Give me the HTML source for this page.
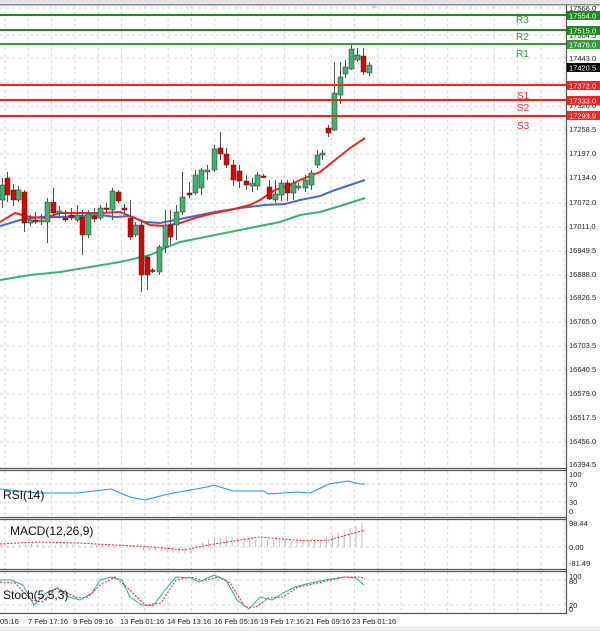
<!DOCTYPE html>
<html><head><meta charset="utf-8"><style>
body{margin:0;background:#fff;width:600px;height:631px;overflow:hidden;font-family:"Liberation Sans",sans-serif}
svg{display:block}
</style></head><body>
<svg id="s" width="600" height="631" xmlns="http://www.w3.org/2000/svg" font-family="Liberation Sans, sans-serif">
<rect x="0" y="0" width="600" height="631" fill="#fff"/>
<rect x="0" y="0" width="600" height="4" fill="#e4e4e4"/>
<rect x="0" y="4" width="600" height="1.5" fill="#8a8a8a"/>
<polygon points="370,5 378,5 374,9" fill="#d0d0d0"/>
<g id="grid" stroke="#d8d8d8" stroke-dasharray="3,3" stroke-width="1"></g>
<g id="chart"></g>
<!-- level lines -->
<g stroke-width="2">
<line x1="0" y1="15" x2="567" y2="15" stroke="#1f8a1f"/>
<line x1="0" y1="30" x2="567" y2="30" stroke="#1f8a1f"/>
<line x1="0" y1="44" x2="567" y2="44" stroke="#3a9a3a"/>
<line x1="0" y1="85" x2="567" y2="85" stroke="#ff2020"/>
<line x1="0" y1="100" x2="567" y2="100" stroke="#ff2020"/>
<line x1="0" y1="116" x2="567" y2="116" stroke="#ff2020"/>
</g>
<g font-size="10">
<text x="516" y="23" fill="#3a9a3a">R3</text>
<text x="516" y="40" fill="#3a9a3a">R2</text>
<text x="516" y="57" fill="#3a9a3a">R1</text>
<text x="517" y="99" fill="#ff3030">S1</text>
<text x="517" y="111" fill="#ff3030">S2</text>
<text x="517" y="129" fill="#ff3030">S3</text>
</g>
<!-- panel borders -->
<g stroke="#555" stroke-width="1.2" fill="none">
<line x1="566.5" y1="5" x2="566.5" y2="614"/>
<line x1="0" y1="468.5" x2="567" y2="468.5"/>
<line x1="0" y1="470.5" x2="567" y2="470.5"/>
<line x1="0" y1="517.5" x2="567" y2="517.5"/>
<line x1="0" y1="519.5" x2="567" y2="519.5"/>
<line x1="0" y1="569.5" x2="567" y2="569.5"/>
<line x1="0" y1="571.5" x2="567" y2="571.5"/>
<line x1="0" y1="613.5" x2="567" y2="613.5"/>
</g>
<rect x="0" y="626" width="600" height="5" fill="#eeeeee"/>
<!-- axis labels -->
<g font-size="7.5" fill="#222">
<text x="569" y="11">17566.0</text>
<text x="569" y="38">17504.5</text>
<text x="569" y="61">17443.0</text>
<text x="569" y="108">17320.0</text>
<text x="569" y="132">17258.5</text>
<text x="569" y="156">17197.0</text>
<text x="569" y="180">17134.0</text>
<text x="569" y="205">17072.0</text>
<text x="569" y="229">17011.0</text>
<text x="569" y="253">16949.5</text>
<text x="569" y="277">16888.0</text>
<text x="569" y="300">16826.5</text>
<text x="569" y="324">16765.0</text>
<text x="569" y="348">16703.5</text>
<text x="569" y="372">16640.5</text>
<text x="569" y="396">16579.0</text>
<text x="569" y="420">16517.5</text>
<text x="569" y="444">16456.0</text>
<text x="569" y="467">16394.5</text>
<text x="569" y="477">100</text>
<text x="569" y="487">70</text>
<text x="569" y="505">30</text>
<text x="569" y="514">0</text>
<text x="569" y="526">98.44</text>
<text x="569" y="550">0.00</text>
<text x="569" y="566">-81.49</text>
<text x="569" y="579">100</text>
<text x="569" y="584">80</text>
<text x="569" y="608">20</text>
<text x="569" y="612">0</text>
</g>
<g font-size="7.5" fill="#fff">
<rect x="567" y="11" width="33" height="9" fill="#1f8a1f"/><text x="569" y="18.5">17554.0</text>
<rect x="567" y="26" width="33" height="9" fill="#1f8a1f"/><text x="569" y="33.5">17515.0</text>
<rect x="567" y="40" width="33" height="9" fill="#3a9a3a"/><text x="569" y="47.5">17476.0</text>
<rect x="567" y="63" width="33" height="9" fill="#000"/><text x="569" y="70.5">17420.5</text>
<rect x="567" y="81" width="33" height="9" fill="#ff2020"/><text x="569" y="88.5">17372.0</text>
<rect x="567" y="96" width="33" height="9" fill="#ff2020"/><text x="569" y="103.5">17333.0</text>
<rect x="567" y="111" width="33" height="9" fill="#ff2020"/><text x="569" y="118.5">17293.9</text>
</g>
<g font-size="12" fill="#111">
<text x="3" y="499">RSI(14)</text>
<text x="10" y="535">MACD(12,26,9)</text>
<text x="3" y="599">Stoch(5,5,3)</text>
</g>
<g font-size="7.5" fill="#222">
<text x="0" y="624">05:16</text>
<text x="28" y="624">7 Feb 17:16</text>
<text x="73" y="624">9 Feb 09:16</text>
<text x="120" y="624">13 Feb 01:16</text>
<text x="167" y="624">14 Feb 13:16</text>
<text x="214" y="624">16 Feb 05:16</text>
<text x="260" y="624">19 Feb 17:16</text>
<text x="306" y="624">21 Feb 09:16</text>
<text x="352" y="624">23 Feb 01:16</text>
</g>
</svg>
<script>
var NS="http://www.w3.org/2000/svg";
function el(p,t,a){var e=document.createElementNS(NS,t);for(var k in a)e.setAttribute(k,a[k]);p.appendChild(e);return e;}
var g=document.getElementById("grid");
for(var x=5;x<566;x+=23.3){el(g,"line",{x1:x,y1:6,x2:x,y2:468});el(g,"line",{x1:x,y1:471,x2:x,y2:517});el(g,"line",{x1:x,y1:520,x2:x,y2:569});el(g,"line",{x1:x,y1:572,x2:x,y2:613});}
[8,35,58,82,106,130,154,178,203,227,251,275,298,322,346,370,394,418,442].forEach(function(y){el(g,"line",{x1:0,y1:y,x2:566,y2:y});});
[484,502,547,580,605].forEach(function(y){el(g,"line",{x1:0,y1:y,x2:566,y2:y});});
var c=document.getElementById("chart");
function pl(pts,col,w,dash){el(c,"polyline",{points:pts.map(function(p){return p.join(",")}).join(" "),fill:"none",stroke:col,"stroke-width":w,"stroke-dasharray":dash||"none"});}
pl([[0,280],[30,275],[60,272],[90,267],[120,262],[150,255],[165,248],[180,242],[200,238],[220,234],[240,230],[260,226],[280,222],[300,215],[320,212],[340,206],[365,198]],"#3cb371",2);
pl([[0,226],[20,220],[40,217],[60,217],[80,216],[100,215],[115,217],[130,216],[145,222],[160,223],[175,220],[195,216],[215,212],[240,208],[265,205],[285,204],[300,200],[320,196],[335,190],[350,185],[365,180]],"#4169e1",2);
pl([[0,222],[15,213],[30,217],[45,218],[60,213],[80,213],[100,213],[120,212],[135,218],[150,225],[165,226],[180,223],[195,218],[210,214],[230,210],[250,205],[260,200],[275,190],[290,185],[300,180],[320,172],[335,160],[350,148],[365,138]],"#ff2020",2);
// candles: x, y1, y2, high, low, up?
var C=[[0,185,200,178,208,1],[5,178,195,172,202,0],[11,190,200,184,206,0],[16,190,200,186,202,1],[22,192,223,190,232,0],[28,220,223,215,226,1],[33,220,222,212,224,0],[39,220,222,214,225,1],[45,202,222,198,243,1],[51,202,213,188,215,0],[57,211,213,206,217,1],[63,218,220,210,222,0],[69,215,218,208,220,0],[75,215,220,205,222,1],[80,217,235,210,255,0],[86,214,235,210,238,1],[92,216,219,208,222,0],[98,208,218,205,220,1],[104,208,209,203,212,0],[110,191,210,188,220,1],[116,192,201,190,203,0],[122,208,210,204,213,0],[128,218,237,200,240,0],[133,225,235,222,237,1],[139,225,275,222,292,0],[145,257,275,255,290,0],[150,270,271,268,273,0],[157,247,272,245,275,1],[163,225,247,210,253,1],[168,225,237,210,245,0],[174,212,225,205,240,1],[180,197,212,172,215,1],[187,193,195,182,198,0],[193,175,193,170,195,1],[199,170,188,168,195,1],[205,170,172,165,180,1],[212,149,170,145,172,1],[218,148,154,132,160,0],[224,154,165,148,168,0],[231,165,180,160,186,0],[237,171,181,165,188,0],[244,181,185,175,190,0],[250,183,186,178,192,1],[255,175,186,172,190,1],[261,176,177,174,178,0],[267,187,199,180,200,0],[273,194,200,180,203,1],[279,183,195,180,201,1],[285,183,193,180,201,0],[291,183,193,180,200,1],[296,186,188,183,190,1],[303,180,188,175,192,1],[309,173,185,170,190,1],[315,155,165,150,168,1],[320,153,155,150,160,1],[326,128,133,125,137,0],[332,93,130,62,131,1],[338,77,95,62,104,1],[343,67,74,60,78,1],[349,49,69,45,70,1],[355,55,60,48,62,1],[361,56,72,48,75,0],[367,65,73,62,76,1]];
C.forEach(function(k){el(c,"line",{x1:k[0]+2.5,y1:k[3],x2:k[0]+2.5,y2:k[4],stroke:"#555","stroke-width":1});el(c,"rect",{x:k[0],y:k[1],width:5,height:Math.max(1.5,k[2]-k[1]),fill:k[5]?"#3cb371":"#e00000",stroke:"#333","stroke-width":0.5});});
// RSI
pl([[0,489],[38,493],[77,493],[111,489],[130,497],[145,500],[168,494],[207,487],[214,485],[233,491],[264,491],[268,494],[298,492],[310,493],[329,484],[348,481],[360,484],[365,484]],"#1e90ff",1);
// MACD hist
for(var i=0;i<62;i++){var x=2+i*5.9;var h;if(x<140)h=-2+Math.sin(i)*1;else if(x<192)h=3+(x-140)*0.08;else if(x<215)h=-(x-192)*0.45;else if(x<250)h=-10;else if(x<320)h=-7;else h=-7-(x-320)*0.4;el(c,"line",{x1:x,y1:547,x2:x,y2:547+h,stroke:"#bbb","stroke-width":1});}
pl([[0,544],[38,542],[77,543],[153,547],[184,550],[214,544],[260,537],[306,541],[329,540],[365,530]],"#ff2020",1,"2,1.5");
// Stoch
pl([[0,580],[11,580],[23,585],[34,605],[46,593],[57,588],[69,597],[80,600],[92,593],[100,580],[111,577],[122,580],[130,597],[142,605],[153,606],[165,590],[176,577],[191,578],[199,582],[214,575],[226,580],[237,600],[249,609],[260,597],[272,600],[283,593],[295,587],[306,584],[325,580],[344,577],[356,578],[364,585]],"#20b2aa",1);
pl([[0,582],[15,583],[31,600],[42,602],[57,588],[77,598],[88,597],[100,585],[115,577],[130,590],[145,605],[161,603],[176,580],[191,577],[203,581],[218,577],[230,583],[245,607],[256,607],[268,598],[283,597],[298,587],[318,583],[344,577],[360,577],[365,579]],"#ff2020",1,"2,1.5");
</script>
</body></html>
